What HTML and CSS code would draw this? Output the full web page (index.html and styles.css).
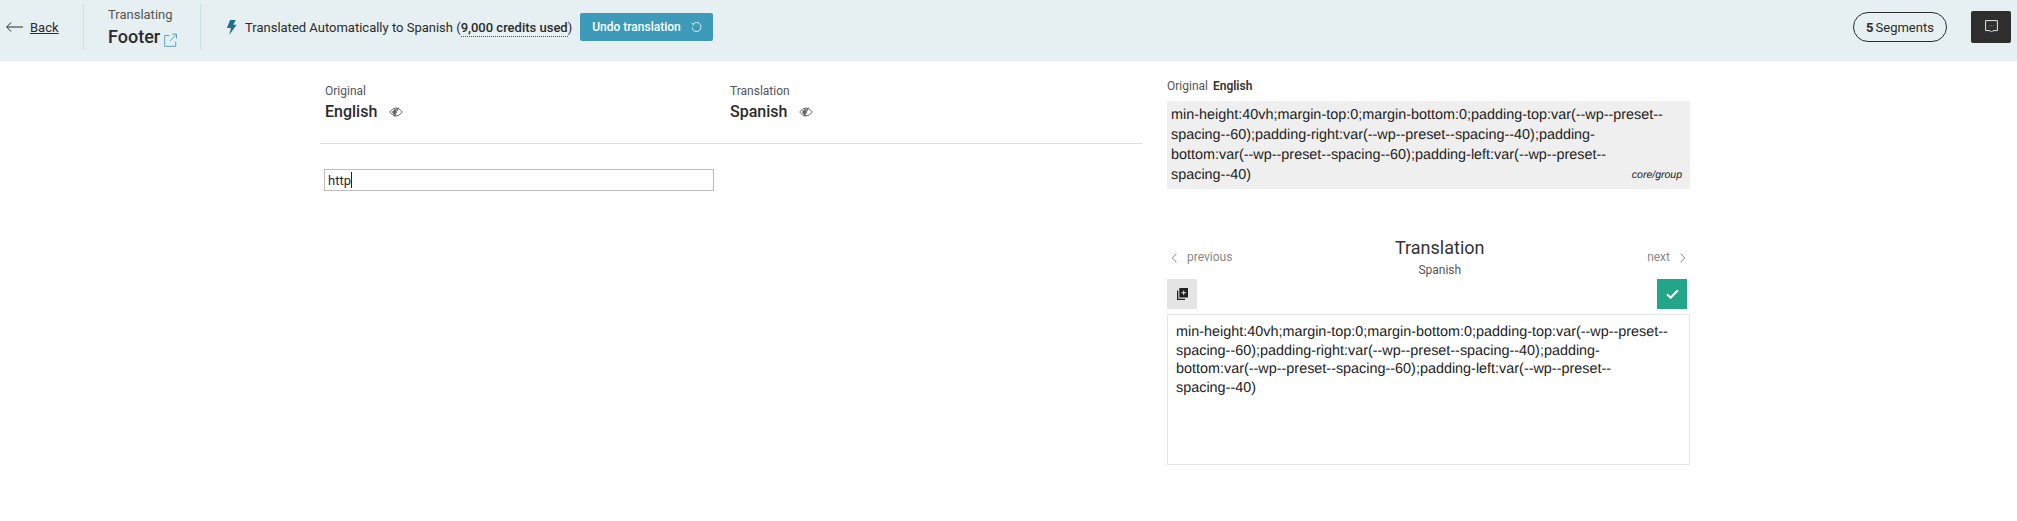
FILE: index.html
```html
<!DOCTYPE html>
<html lang="en">
<head>
<meta charset="utf-8">
<title>Translating Footer</title>
<link rel="stylesheet" href="styles.css">
</head>
<body>
<header class="topbar">
  <a class="back" href="#">
    <svg class="back-arrow" width="17" height="10" viewBox="0 0 17 10"><path d="M5 .5.7 5 5 9.5M.7 5H17" fill="none" stroke="#2b2b2b" stroke-width="1"/></svg>
    <span class="back-text">Back</span>
  </a>
  <div class="title-block">
    <div class="title-small">Translating</div>
    <div class="title-main">Footer
      <svg class="ext" width="13" height="14" viewBox="0 0 13 14"><path d="M5.5 2.5H.7v10.800h11V8.500M6 8l6-6.500M8 1h4.500v4.500" fill="none" stroke="#5aa5bd" stroke-width="1"/></svg>
    </div>
  </div>
  <div class="status">
    <svg class="bolt" width="11" height="15" viewBox="0 0 11 16"><path d="M4 0h6L7.500 5H11L3 16l2-7.500H.5L2 5z" fill="#23708c"/></svg>
    <span class="status-text">Translated Automatically to Spanish (<span class="credits">9,000 credits used</span>)</span>
    <button class="undo">Undo translation
      <svg width="11" height="11" viewBox="0 0 11 11"><path d="M2.300 1.800A4.500 4.500 0 1 1 1 5.500M.8 1.300l1.600.7-.4 1.600" fill="none" stroke="#dcedf3" stroke-width="1"/></svg>
    </button>
  </div>
  <div class="segments"><b>5</b> Segments</div>
  <button class="chat">
    <svg width="13" height="14" viewBox="0 0 13 14"><path d="M.6.600h11.800v10H8l-1.500 1.500L5 10.600H.6z" fill="none" stroke="#e8e8e8" stroke-width="1"/><path d="M4.500 5.800h.6M6.300 5.800h.6M8 5.800h.6" stroke="#bbb" stroke-width="1"/></svg>
  </button>
</header>

<main class="workspace">
  <section class="editor">
    <div class="lang-row">
      <div class="lang-col">
        <div class="lang-label">Original</div>
        <div class="lang-name">English
          <svg class="eye" width="14" height="10" viewBox="0 0 14 10"><path d="M.7 5Q3.500 1 7 1t6.300 4Q10.500 9 7 9T.7 5z" fill="none" stroke="#666" stroke-width="1"/><path d="M3 5q1.500-3 5-3.500L6 8.500Q4 7.500 3 5z" fill="#666"/><path d="M9.500.5l-4 9" stroke="#666" stroke-width="1"/></svg>
        </div>
      </div>
      <div class="lang-col">
        <div class="lang-label">Translation</div>
        <div class="lang-name">Spanish
          <svg class="eye" width="14" height="10" viewBox="0 0 14 10"><path d="M.7 5Q3.500 1 7 1t6.300 4Q10.500 9 7 9T.7 5z" fill="none" stroke="#666" stroke-width="1"/><path d="M3 5q1.500-3 5-3.500L6 8.500Q4 7.500 3 5z" fill="#666"/><path d="M9.500.5l-4 9" stroke="#666" stroke-width="1"/></svg>
        </div>
      </div>
    </div>
    <div class="segment-input"><span>http</span><i class="caret"></i></div>
  </section>

  <aside class="panel">
    <div class="panel-head">Original <b>English</b></div>
    <div class="source">
      <p>min-height:40vh;margin-top:0;margin-bottom:0;padding-top:var(--wp--preset--spacing--60);padding-right:var(--wp--preset--spacing--40);padding-bottom:var(--wp--preset--spacing--60);padding-left:var(--wp--preset--<span class="nowrap">spacing--40)</span></p>
      <em class="tag">core/group</em>
    </div>
    <div class="nav">
      <span class="nav-link"><svg width="7" height="10" viewBox="0 0 7 10"><path d="M5.500.7 1.200 5l4.300 4.300" fill="none" stroke="#888" stroke-width="1"/></svg>previous</span>
      <div class="nav-title">
        <div class="nav-heading">Translation</div>
        <div class="nav-sub">Spanish</div>
      </div>
      <span class="nav-link">next<svg width="7" height="10" viewBox="0 0 7 10"><path d="M1.500.7 5.800 5 1.500 9.300" fill="none" stroke="#888" stroke-width="1"/></svg></span>
    </div>
    <div class="tools">
      <button class="copy">
        <svg width="11" height="12" viewBox="0 0 11 12"><path d="M0 2.500h1.300v8.200H8V12H0z" fill="#222"/><path d="M2.300 0H11v9.500H2.300z" fill="#222"/><path d="M6.700 2.500v4.500M4.500 4.700h4.400" stroke="#e5e5e5" stroke-width="1"/></svg>
      </button>
      <button class="confirm">
        <svg width="13" height="10" viewBox="0 0 13 10"><path d="M1 5.200 4.600 8.700 12 1.200" fill="none" stroke="#fff" stroke-width="2"/></svg>
      </button>
    </div>
    <div class="target"><p>min-height:40vh;margin-top:0;margin-bottom:0;padding-top:var(--wp--preset--spacing--60);padding-right:var(--wp--preset--spacing--40);padding-bottom:var(--wp--preset--spacing--60);padding-left:var(--wp--preset--<span class="nowrap">spacing--40)</span></p></div>
  </aside>
</main>
</body>
</html>
```

FILE: styles.css
```css
* { box-sizing: border-box; }
html, body { margin: 0; padding: 0; }
body {
  font-family: Roboto, "Liberation Sans", sans-serif;
  color: #2b2b2b;
  background: #fff;
  height: 521px;
  overflow: hidden;
}
button { font-family: inherit; border: 0; padding: 0; }

.topbar {
  height: 61px;
  padding-bottom: 7px;
  background: #e6eff2;
  display: flex;
  align-items: center;
}
.back {
  width: 84px;
  height: 46px;
  padding-left: 6px;
  display: flex;
  align-items: center;
  gap: 7px;
  color: #2b2b2b;
  font-size: 13px;
  border-right: 1px solid #c9dde4;
  text-decoration: none;
}
.back-text { text-decoration: underline; }
.title-block {
  width: 117px;
  height: 46px;
  padding-left: 24px;
  border-right: 1px solid #c9dde4;
}
.title-small { font-size: 13px; line-height: 15px; color: #555; margin-top: 3px; }
.title-main {
  font-size: 18px;
  font-weight: 500;
  line-height: 24px;
  margin-top: 3px;
  display: flex;
  align-items: center;
  gap: 4px;
}
.ext { margin-top: 5px; }
.status {
  display: flex;
  align-items: center;
  margin-left: 25px;
  font-size: 13px;
}
.bolt { margin-right: 8px; }
.credits {
  font-weight: 500;
  border-bottom: 1px dotted #555;
  padding-bottom: 1px;
}
.undo {
  margin-left: 8px;
  width: 133px;
  height: 28px;
  padding-left: 12px;
  background: #3d9bb9;
  color: #fff;
  border-radius: 2px;
  font-size: 12px;
  font-weight: 500;
  display: flex;
  align-items: center;
  gap: 10px;
}
.segments {
  margin-left: auto;
  width: 94px;
  height: 30px;
  border: 1px solid #2b2b2b;
  border-radius: 15px;
  font-size: 13px;
  display: flex;
  align-items: center;
  justify-content: center;
  gap: 2px;
}
.chat {
  margin-left: 24px;
  margin-right: 6px;
  width: 40px;
  height: 32px;
  background: #2f2f2f;
  border-radius: 2px;
  display: flex;
  align-items: center;
  justify-content: center;
}

.workspace {
  display: flex;
  padding-left: 320px;
}
.editor { width: 822px; }
.lang-row {
  display: flex;
  height: 83px;
  padding: 23px 0 0 5px;
  border-bottom: 1px solid #d5dee2;
}
.lang-col { width: 405px; }
.lang-label { font-size: 12px; line-height: 15px; color: #555; }
.lang-name {
  font-size: 16px;
  font-weight: 500;
  line-height: 22px;
  margin-top: 2px;
  display: flex;
  align-items: center;
  gap: 12px;
}
.segment-input {
  width: 390px;
  height: 22px;
  margin: 25px 0 0 4px;
  border: 1px solid #bdbdbd;
  padding-left: 3px;
  font-size: 13px;
  display: flex;
  align-items: center;
}
.caret {
  display: block;
  width: 1px;
  height: 16px;
  background: #222;
}

.panel {
  width: 523px;
  margin-left: 25px;
  padding-top: 18px;
}
.panel-head { font-size: 12px; line-height: 15px; color: #555; }
.panel-head b { color: #333; margin-left: 2px; font-weight: 600; }
.source {
  position: relative;
  height: 88px;
  margin-top: 7px;
  padding: 4px;
  background: #efefef;
  font-family: "Liberation Sans", Arial, sans-serif;
  font-size: 14.4px;
  line-height: 20px;
  color: #222;
  text-rendering: geometricPrecision;
}
.source p, .target p { margin: 0; width: 496px; }
.nowrap { white-space: nowrap; }
.tag {
  position: absolute;
  right: 8px;
  bottom: 8px;
  font-size: 10.5px;
  line-height: 12px;
}
.nav {
  display: flex;
  justify-content: space-between;
  align-items: flex-start;
  margin-top: 48px;
  padding: 0 4px;
}
.nav-link {
  display: flex;
  align-items: center;
  gap: 9px;
  font-size: 12px;
  line-height: 15px;
  color: #888;
  margin-top: 13px;
}
.nav-title { text-align: center; }
.nav-heading { font-size: 18px; line-height: 22px; color: #333; }
.nav-sub { font-size: 12px; line-height: 15px; color: #555; margin-top: 4px; }
.tools {
  display: flex;
  justify-content: space-between;
  padding-right: 3px;
  margin-top: 1px;
}
.copy, .confirm {
  width: 30px;
  height: 30px;
  display: flex;
  align-items: center;
  justify-content: center;
}
.copy { background: #e5e5e5; }
.confirm { background: #22a589; }
.target {
  height: 151px;
  margin-top: 5px;
  border: 1px solid #e5e5e5;
  padding: 8px;
  font-family: "Liberation Sans", Arial, sans-serif;
  font-size: 14.4px;
  line-height: 18.5px;
  color: #222;
  text-rendering: geometricPrecision;
}
```
